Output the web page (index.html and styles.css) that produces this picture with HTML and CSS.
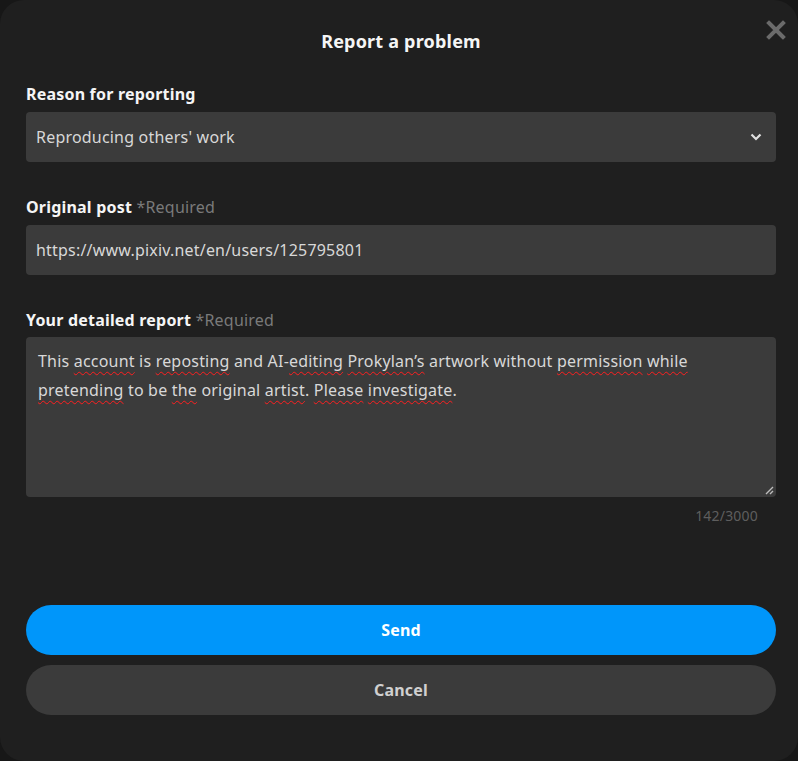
FILE: index.html
```html
<!DOCTYPE html>
<html lang="en">
<head>
    <meta charset="UTF-8">
    <meta name="viewport" content="width=device-width, initial-scale=1.0">
    <title>Report a problem</title>
    <link rel="stylesheet" href="styles.css">
</head>
<body>
    <div class="modal">
        <button class="close" type="button" aria-label="Close">
            <svg width="20" height="20" viewBox="0 0 20 20">
                <path d="M3 3 L17 17 M17 3 L3 17" stroke="currentColor" stroke-width="4" stroke-linecap="square"/>
            </svg>
        </button>
        <h1 class="title">Report a problem</h1>

        <form class="report-form">
            <div class="field">
                <label class="label">Reason for reporting</label>
                <div class="select">
                    <span>Reproducing others' work</span>
                    <svg class="chevron" width="12" height="8" viewBox="0 0 12 8">
                        <path d="M1.5 1.5 L6 6 L10.5 1.5" fill="none" stroke="currentColor" stroke-width="2.2"/>
                    </svg>
                </div>
            </div>

            <div class="field">
                <label class="label">Original post <span class="req">*Required</span></label>
                <div class="input">https://www.pixiv.net/en/users/125795801</div>
            </div>

            <div class="field">
                <label class="label label-tight">Your detailed report <span class="req">*Required</span></label>
                <div class="textarea">
                    This <span class="sp">account</span> is <span class="sp">reposting</span> and AI-<span class="sp">editing</span> <span class="sp">Prokylan’s</span> artwork without <span class="sp">permission</span> <span class="sp">while</span><br>
                    <span class="sp">pretending</span> to be <span class="sp">the</span> original <span class="sp">artist</span>. <span class="sp">Please</span> <span class="sp">investigate</span>.
                    <svg class="grip" width="9" height="9" viewBox="0 0 9 9">
                        <path d="M8 1 L1 8 M8 5 L5 8" stroke="#bdbdbd" stroke-width="1.4"/>
                    </svg>
                </div>
                <div class="counter">142/3000</div>
            </div>

            <div class="actions">
                <button type="submit" class="btn btn-send">Send</button>
                <button type="button" class="btn btn-cancel">Cancel</button>
            </div>
        </form>
    </div>
</body>
</html>
```

FILE: styles.css
```css
body {
    margin: 0;
    background-color: #171717;
    font-family: "Noto Sans", "Open Sans", sans-serif;
    letter-spacing: 0.2px;
}
.modal {
    position: relative;
    box-sizing: border-box;
    width: 798px;
    height: 761px;
    padding: 22px 22px 0 26px;
    background-color: #1f1f1f;
    border-radius: 24px;
}
.close {
    position: absolute;
    top: 20px;
    right: 12px;
    padding: 0;
    border: none;
    background: none;
    color: #6b6b6b;
    cursor: pointer;
}
.title {
    margin: 6px 0 28px;
    text-align: center;
    font-size: 18px;
    line-height: 26px;
    font-weight: bold;
    color: #f5f5f5;
}
.report-form {
    display: flex;
    flex-direction: column;
}
.field {
    margin-bottom: 33px;
}
.label {
    display: block;
    margin-bottom: 6px;
    font-size: 16px;
    line-height: 24px;
    font-weight: bold;
    color: #f5f5f5;
}
.label-tight {
    margin-bottom: 5px;
}
.req {
    font-weight: normal;
    color: #7a7a7a;
}
.select,
.input,
.textarea {
    box-sizing: border-box;
    background-color: #3b3b3b;
    border-radius: 4px;
    color: #d8d8d8;
    font-size: 16px;
}
.select,
.input {
    display: flex;
    align-items: center;
    justify-content: space-between;
    height: 50px;
    padding: 0 14px 0 10px;
}
.chevron {
    color: #e0e0e0;
}
.textarea {
    position: relative;
    height: 160px;
    padding: 10px 12px;
    line-height: 29px;
}
.sp {
    text-decoration: underline wavy #ff2020;
    text-decoration-thickness: 1.4px;
    text-underline-offset: 4px;
}
.grip {
    position: absolute;
    right: 2px;
    bottom: 2px;
}
.counter {
    margin: 9px 18px 0 0;
    text-align: right;
    font-size: 14px;
    line-height: 20px;
    color: #5e5e5e;
}
.actions {
    display: flex;
    flex-direction: column;
    gap: 10px;
    margin-top: 46px;
}
.btn {
    height: 50px;
    border: none;
    border-radius: 25px;
    font-family: inherit;
    font-size: 16px;
    font-weight: bold;
    letter-spacing: 0.2px;
    cursor: pointer;
}
.btn-send {
    background-color: #0096fa;
    color: #ffffff;
}
.btn-cancel {
    background-color: #3b3b3b;
    color: #d0d0d0;
}
```
